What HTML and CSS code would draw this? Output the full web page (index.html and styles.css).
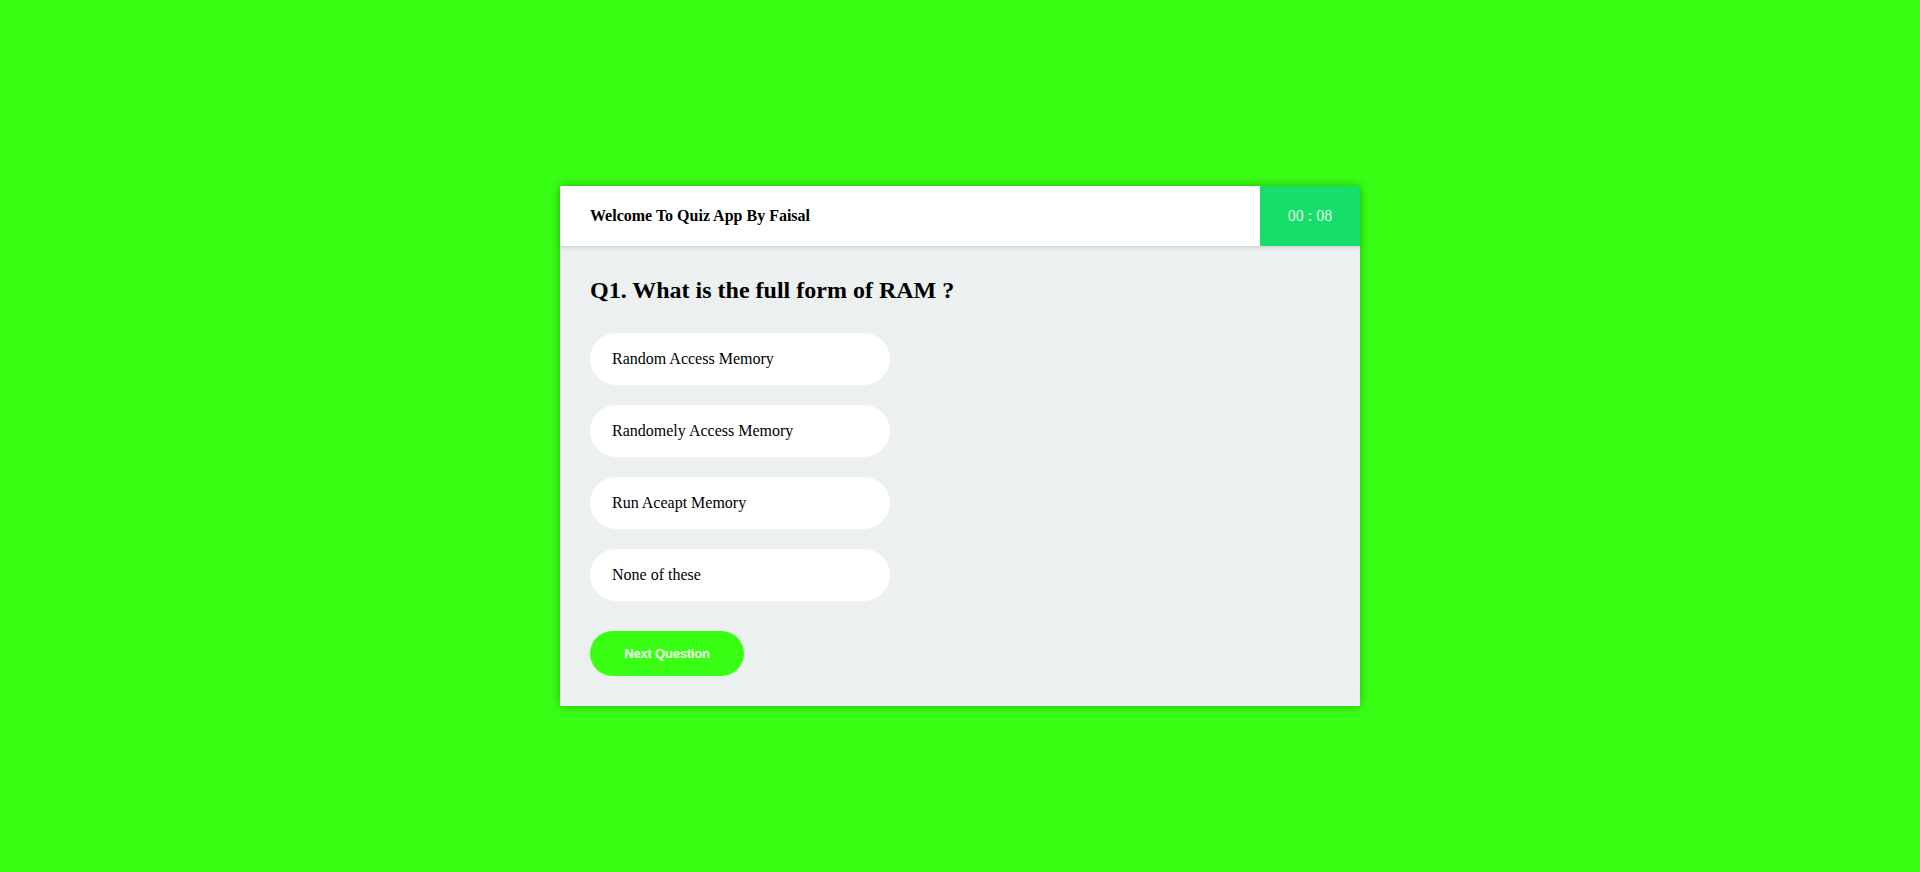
FILE: index.html
```html
<!DOCTYPE html>
<html lang="en">
<head>
<meta charset="utf-8">
<title>Quiz App</title>
<link rel="stylesheet" href="styles.css">
</head>
<body>
<div class="page">
  <div class="quiz">
    <header class="quiz-header">
      <h1 class="quiz-title">Welcome To Quiz App By Faisal</h1>
      <div class="timer">00 : 08</div>
    </header>
    <main class="quiz-body">
      <h2 class="question">Q1. What is the full form of RAM ?</h2>
      <ul class="options">
        <li class="option">Random Access Memory</li>
        <li class="option">Randomely Access Memory</li>
        <li class="option">Run Aceapt Memory</li>
        <li class="option">None of these</li>
      </ul>
      <button class="next-btn">Next Question</button>
    </main>
  </div>
</div>
</body>
</html>
```

FILE: styles.css
```css
* { box-sizing: border-box; }
html, body {
  margin: 0;
  padding: 0;
  background: #39ff14;
  font-family: "Liberation Serif", "Times New Roman", serif;
  color: #000;
}
.page {
  min-height: 872px;
  display: flex;
  justify-content: center;
  align-items: flex-start;
  padding-top: 186px;
}
.quiz {
  width: 800px;
  background: #ecf0f1;
  box-shadow: 0 0 10px rgba(0, 0, 0, 0.3);
}
.quiz-header {
  height: 60px;
  display: flex;
  align-items: stretch;
  justify-content: space-between;
  background: #fff;
  box-shadow: 0 2px 4px rgba(0, 0, 0, 0.12);
  position: relative;
}
.quiz-title {
  margin: 0;
  padding-left: 30px;
  display: flex;
  align-items: center;
  font-size: 16px;
  font-weight: bold;
}
.timer {
  width: 100px;
  background: #15de6b;
  color: #e8ffe8;
  display: flex;
  align-items: center;
  justify-content: center;
  font-size: 16px;
}
.quiz-body {
  padding: 30px 30px 30px;
}
.question {
  margin: 0 0 29px;
  font-size: 24px;
  line-height: 28px;
  font-weight: bold;
}
.options {
  list-style: none;
  margin: 0 0 30px;
  padding: 0;
  display: flex;
  flex-direction: column;
  gap: 20px;
}
.option {
  width: 300px;
  height: 52px;
  background: #fff;
  border-radius: 26px;
  padding: 0 22px;
  display: flex;
  align-items: center;
  font-size: 16px;
}
.next-btn {
  display: block;
  width: 154px;
  height: 45px;
  border: none;
  border-radius: 23px;
  background: #39ff14;
  color: #f4fff0;
  font-family: Arial, "Liberation Sans", sans-serif;
  font-size: 13px;
  font-weight: bold;
  letter-spacing: -0.2px;
  cursor: pointer;
}
```
